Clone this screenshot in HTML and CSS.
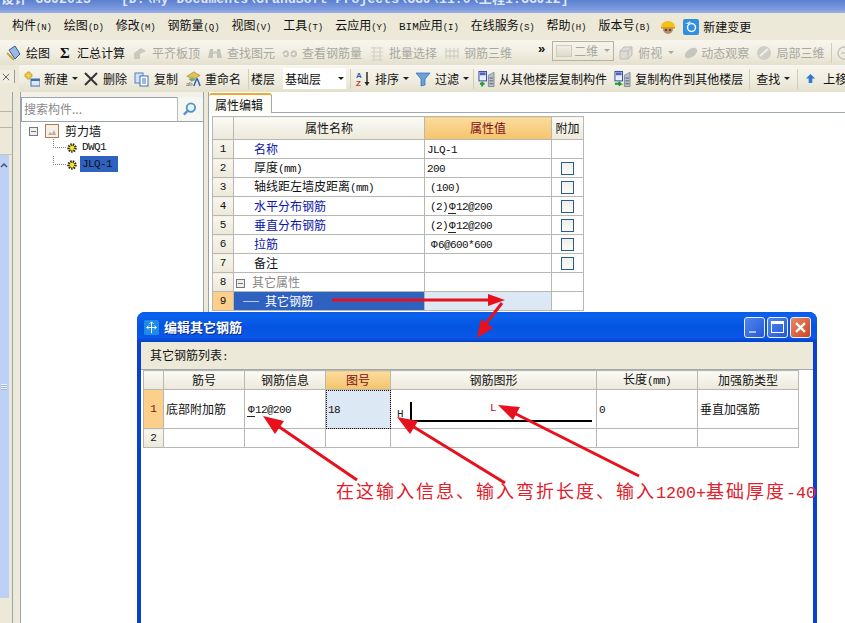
FILE: index.html
```html
<!DOCTYPE html>
<html lang="zh-CN">
<head>
    <meta charset="UTF-8">
    <title>GGJ2013</title>
    <link rel="stylesheet" href="styles.css">
</head>
<body>
    <div class="titlebar"><span>设计 GGJ2013</span><span class="title-path">[D:\My Documents\GrandSoft Projects\GGJ\11.0\工程1.GGJ12]</span></div>

    <div class="menubar">
        <span>构件<i>(N)</i></span>
        <span>绘图<i>(D)</i></span>
        <span>修改<i>(M)</i></span>
        <span>钢筋量<i>(Q)</i></span>
        <span>视图<i>(V)</i></span>
        <span>工具<i>(T)</i></span>
        <span>云应用<i>(Y)</i></span>
        <span><b class="lat">BIM</b>应用<i>(I)</i></span>
        <span>在线服务<i>(S)</i></span>
        <span>帮助<i>(H)</i></span>
        <span>版本号<i>(B)</i></span>
        <svg class="ico hat" viewBox="0 0 16 16"><circle cx="8" cy="10" r="5" fill="#b98a68"/><path d="M1 9c0-5 3-7 7-7s7 2 7 7z" fill="#f2c21a"/><rect x="1" y="8" width="14" height="1.5" fill="#d99a10"/><circle cx="6" cy="11" r="1" fill="#333"/><circle cx="10" cy="11" r="1" fill="#333"/></svg>
        <span class="tool change"><svg class="ico" viewBox="0 0 16 16"><rect width="16" height="16" rx="2" fill="#2f8fe0"/><circle cx="8.5" cy="8.5" r="4" fill="none" stroke="#fff" stroke-width="1.5"/><path d="M2 5l5-3 1 3z" fill="#bfe2ff"/></svg>新建变更</span>
    </div>

    <div class="toolbar tb-top">
        <span class="tool"><svg class="ico" viewBox="0 0 16 16"><path d="M3 5l6-4 5 8-5 5z" fill="#9db7e4" stroke="#3a5a9a"/><path d="M1 8l7 7" stroke="#c9a340" stroke-width="2"/></svg>绘图</span>
        <span class="tool sum"><b class="sigma">Σ</b>汇总计算</span>
        <span class="tool off"><svg class="ico" viewBox="0 0 16 16"><path d="M2 14V8l7-5 5 3-6 3v5z" fill="#c8c8c0"/></svg>平齐板顶</span>
        <span class="tool off"><svg class="ico" viewBox="0 0 16 16"><path d="M1 13l2-9h3v9zM10 13V4h3l2 9z" fill="#c4c4bc"/><rect x="6" y="6" width="4" height="3" fill="#d2d2ca"/></svg>查找图元</span>
        <span class="tool off"><svg class="ico" viewBox="0 0 16 16"><path d="M1 9c2-4 5-3 5 0s-3 3-4 1M9 9c2-4 5-3 5 0s-3 3-5 1" fill="none" stroke="#c4c4bc" stroke-width="2"/></svg>查看钢筋量</span>
        <span class="tool off"><svg class="ico" viewBox="0 0 16 16"><path d="M2 3h12M2 7h12M2 11h12M2 15h12M5 2v14M11 2v14" stroke="#d0d0c8"/></svg>批量选择</span>
        <span class="tool off"><svg class="ico" viewBox="0 0 16 16"><path d="M2 3v11M6 3v11M10 3v11M14 3v11M2 6h12M2 11h12" stroke="#c8c8c0"/></svg>钢筋三维</span>
        <span class="more">»</span>
        <span class="combo-off"><span class="swatch"></span>二维<span class="caret"></span></span>
        <span class="tool off view"><svg class="ico" viewBox="0 0 16 16"><path d="M2 6l4-4h8v8l-4 4H2z" fill="#dcdcd4" stroke="#bdbdb5"/><path d="M2 6h8v8M10 6l4-4" fill="none" stroke="#bdbdb5"/></svg>俯视<span class="caret off-caret"></span></span>
        <span class="tool off orbit"><svg class="ico" viewBox="0 0 16 16"><ellipse cx="8" cy="8" rx="7" ry="4" transform="rotate(-35 8 8)" fill="#c6c6be"/></svg>动态观察</span>
        <span class="tool off"><svg class="ico" viewBox="0 0 16 16"><circle cx="8" cy="8" r="7" fill="#cfcfc7"/><path d="M4 11l8-7" stroke="#f2f0e6" stroke-width="2"/></svg>局部三维</span>
        <span class="sep end-sep"></span>
        <svg class="ico" viewBox="0 0 16 16"><circle cx="8" cy="8" r="6" fill="none" stroke="#c4c4bc" stroke-width="1.5"/><path d="M5 8h6" stroke="#c4c4bc" stroke-width="1.5"/></svg>
    </div>

    <div class="tb-row">
        <button class="close-x">
            <svg viewBox="0 0 10 10"><path d="M1 1l8 8M9 1l-8 8" stroke="#444" fill="none"/></svg>
        </button>
        <div class="toolbar tb-edit">
            <span class="tool"><svg class="ico" viewBox="0 0 16 16"><path d="M3 1h3v2h2v3H6v2H3V6H1V3h2z" fill="#f4d040" stroke="#a88a20" stroke-width=".6"/><rect x="7" y="8" width="9" height="7" fill="#dce8fa" stroke="#3f6fb5"/><rect x="7" y="8" width="9" height="2" fill="#3f6fb5"/></svg>新建<span class="caret"></span></span>
            <span class="tool del"><svg class="ico" viewBox="0 0 14 14"><path d="M1 1l12 12M13 1L1 13" stroke="#333" stroke-width="2" fill="none"/></svg>删除</span>
            <span class="tool"><svg class="ico" viewBox="0 0 16 16"><rect x="1" y="2" width="8" height="10" fill="#cfe0f7" stroke="#5a7fb5"/><rect x="6" y="5" width="8" height="10" fill="#fff" stroke="#3f6fb5"/><path d="M8 8h4M8 10h4M8 12h4" stroke="#3f6fb5"/></svg>复制</span>
            <span class="tool rename"><svg class="ico" viewBox="0 0 18 18"><path d="M2 6l8-5 7 4-7 4z" fill="#e3c05a" stroke="#8a7428" stroke-width=".6"/><path d="M4 9l5-2 3 3-5 2z" fill="#7fb06a"/><text x="1" y="17" class="ico-text">ab</text><path d="M10 17l3-8h1l3 8" fill="none" stroke="#2a5cb0" stroke-width="1.6"/></svg>重命名</span>
            <span class="sep"></span>
            <span class="floor-label">楼层</span>
            <span class="combo">基础层<span class="caret"></span></span>
            <span class="sep"></span>
            <span class="tool"><svg class="ico" viewBox="0 0 16 16"><text x="1" y="7" class="az a">A</text><text x="1" y="15" class="az z">Z</text><path d="M12 1v12" stroke="#222" stroke-width="1.4"/><path d="M9.5 11l2.500 4 2.500-4z" fill="#222"/></svg>排序<span class="caret"></span></span>
            <span class="tool filter"><svg class="ico" viewBox="0 0 16 16"><path d="M1 2h14L10 8v6l-4 1V8z" fill="#6aa0dc" stroke="#2f66b0" stroke-width=".7"/></svg>过滤<span class="caret"></span></span>
            <span class="sep"></span>
            <span class="tool"><svg class="ico wide" viewBox="0 0 18 18"><rect x="1" y="1" width="8" height="10" fill="#e8eefb" stroke="#33459a"/><rect x="2" y="2" width="6" height="3" fill="#4c62c8"/><path d="M2 14h5M4.500 12v5" stroke="#1d9a3c" stroke-width="2"/><path d="M11 5l6-3v15h-6z" fill="#b9c2cc" stroke="#66707c" stroke-width=".7"/><path d="M12 8h4M12 11h4M12 14h4" stroke="#55606c"/></svg>从其他楼层复制构件</span>
            <span class="tool"><svg class="ico wide" viewBox="0 0 18 18"><rect x="1" y="1" width="8" height="10" fill="#e8eefb" stroke="#33459a"/><rect x="2" y="2" width="6" height="3" fill="#4c62c8"/><path d="M1 14h6l-2-2M7 14l-2 2" stroke="#1d9a3c" stroke-width="2" fill="none"/><path d="M11 5l6-3v15h-6z" fill="#b9c2cc" stroke="#66707c" stroke-width=".7"/><path d="M12 8h4M12 11h4M12 14h4" stroke="#55606c"/></svg>复制构件到其他楼层</span>
            <span class="sep find-sep"></span>
            <span class="tool find">查找<span class="caret"></span></span>
            <span class="sep up-sep"></span>
            <span class="tool up"><svg class="ico small" viewBox="0 0 12 12"><path d="M6 1l5 5H8v5H4V6H1z" fill="#2f78d8"/></svg>上移</span>
        </div>
    </div>

    <div class="main">
        <div class="nav">
            <div class="nav-head"></div>
            <div class="nav-rest">
                <svg class="chev" viewBox="0 0 8 6"><path d="M1 5l3-3 3 3" fill="none" stroke="#456" stroke-width="1.5"/></svg>
                <span class="grip"></span>
            </div>
        </div>

        <div class="tree-panel">
            <div class="search">
                <span class="search-box">搜索构件...</span>
                <span class="search-btn"><svg viewBox="0 0 16 16"><circle cx="9.500" cy="6.500" r="4.500" fill="#e8f2fb" stroke="#4f94cf" stroke-width="2"/><path d="M6 10l-4 4" stroke="#4f94cf" stroke-width="2.500"/></svg></span>
            </div>
            <div class="tree">
                <div class="tree-root">
                    <span class="minus"></span>
                    <svg class="ico root-ico" viewBox="0 0 14 14"><rect x=".5" y=".5" width="13" height="13" fill="#f6efe6" stroke="#b07a55"/><path d="M3 11l2-3 2 2 2-4 2 5z" fill="#b8b0a8"/></svg>
                    <span class="root-label">剪力墙</span>
                </div>
                <div class="tree-kids">
                    <div class="tree-item">
                        <svg class="gear" viewBox="0 0 12 12"><circle cx="6" cy="6" r="3.500" fill="#f6e324" stroke="#222" stroke-width="2.500" stroke-dasharray="1.400 1"/></svg>
                        <span class="lat item-label">DWQ1</span>
                    </div>
                    <div class="tree-item">
                        <svg class="gear" viewBox="0 0 12 12"><circle cx="6" cy="6" r="3.500" fill="#f6e324" stroke="#222" stroke-width="2.500" stroke-dasharray="1.400 1"/></svg>
                        <span class="lat item-label selected">JLQ-1</span>
                    </div>
                </div>
            </div>
        </div>

        <div class="prop-panel">
            <div class="tabs"><span class="tab">属性编辑</span></div>
            <table class="grid prop-grid">
                <colgroup><col class="p-num"><col class="p-name"><col class="p-val"><col class="p-ext"></colgroup>
                <tr class="head">
                    <th></th>
                    <th>属性名称</th>
                    <th class="hot">属性值</th>
                    <th>附加</th>
                </tr>
                <tr><td class="num">1</td><td class="name link">名称</td><td class="val"><span class="lat">JLQ-1</span></td><td></td></tr>
                <tr><td class="num">2</td><td class="name">厚度<span class="lat">(mm)</span></td><td class="val"><span class="lat">200</span></td><td><span class="check"></span></td></tr>
                <tr><td class="num">3</td><td class="name">轴线距左墙皮距离<span class="lat">(mm)</span></td><td class="val ind"><span class="lat">(100)</span></td><td><span class="check"></span></td></tr>
                <tr><td class="num">4</td><td class="name link">水平分布钢筋</td><td class="val ind"><span class="lat">(2)<b class="rebar">Φ</b>12@200</span></td><td><span class="check"></span></td></tr>
                <tr><td class="num">5</td><td class="name link">垂直分布钢筋</td><td class="val ind"><span class="lat">(2)<b class="rebar">Φ</b>12@200</span></td><td><span class="check"></span></td></tr>
                <tr><td class="num">6</td><td class="name link">拉筋</td><td class="val ind"><span class="lat"><b class="rebar plain">Φ</b>6@600*600</span></td><td><span class="check"></span></td></tr>
                <tr><td class="num">7</td><td class="name">备注</td><td></td><td><span class="check"></span></td></tr>
                <tr><td class="num">8</td><td class="group"><span class="minus light"></span>其它属性</td><td></td><td></td></tr>
                <tr class="active"><td class="num">9</td><td class="sub"><span class="branch"></span>其它钢筋</td><td class="val-sel"></td><td></td></tr>
            </table>
        </div>
    </div>

    <div class="dialog">
        <div class="dlg-title">
            <svg class="dlg-ico" viewBox="0 0 16 16"><rect width="16" height="16" rx="2" fill="#1f8ae8"/><path d="M8 2v12M3 8h10M3 8l2-2M3 8l2 2M13 8l-2-2M13 8l-2 2M8 2L6 4M8 2l2 2" stroke="#fff" fill="none"/></svg>
            <span class="dlg-name">编辑其它钢筋</span>
            <span class="win-btn min"><span></span></span>
            <span class="win-btn max"><span></span></span>
            <span class="win-btn close"><svg viewBox="0 0 10 10"><path d="M1 1l8 8M9 1l-8 8" stroke="#fff" stroke-width="2"/></svg></span>
        </div>
        <div class="dlg-body">
            <div class="dlg-label">其它钢筋列表<span class="lat">:</span></div>
            <table class="grid rebar-grid">
                <colgroup><col class="r-num"><col class="r-a"><col class="r-b"><col class="r-c"><col class="r-d"><col class="r-e"><col class="r-f"></colgroup>
                <tr class="head">
                    <th></th>
                    <th>筋号</th>
                    <th>钢筋信息</th>
                    <th class="hot">图号</th>
                    <th>钢筋图形</th>
                    <th>长度<span class="lat">(mm)</span></th>
                    <th>加强筋类型</th>
                </tr>
                <tr class="tall">
                    <td class="num hot-num">1</td>
                    <td class="val">底部附加筋</td>
                    <td class="val"><span class="lat"><b class="rebar">Φ</b>12@200</span></td>
                    <td class="val focus"><span class="lat">18</span></td>
                    <td class="shape">
                        <svg viewBox="0 0 205 38">
                            <text x="6" y="27" class="shape-h">H</text>
                            <text x="99" y="21" class="shape-l">L</text>
                            <path d="M20 12v20M20 31h181" stroke="#000" stroke-width="2" fill="none"/>
                        </svg>
                    </td>
                    <td class="val"><span class="lat">0</span></td>
                    <td class="val">垂直加强筋</td>
                </tr>
                <tr><td class="num">2</td><td></td><td></td><td></td><td></td><td></td><td></td></tr>
            </table>
        </div>
    </div>

    <svg class="marks" viewBox="0 0 845 623">
        <g stroke="#e8101c" stroke-width="3" fill="none">
            <path d="M332 300H492"/>
            <path d="M502 303L484 326"/>
            <path d="M357 480L275 424"/>
            <path d="M505 483L409 424"/>
            <path d="M639 476L512 412"/>
        </g>
        <g fill="#e8101c">
            <path d="M505 300L488 294V306z"/>
            <path d="M477 338L481 319L493 328z"/>
            <path d="M263 416L284 421L275 434z"/>
            <path d="M397 417L418 421L410 434z"/>
            <path d="M498 405L520 407L513 420z"/>
        </g>
    </svg>
    <div class="note">在这输入信息、输入弯折长度、输入<span>1200+</span>基础厚度<span>-40</span></div>
</body>
</html>
```

FILE: styles.css
```css
* {
    box-sizing: border-box;
}
html, body {
    margin: 0;
    height: 623px;
    overflow: hidden;
}
body {
    position: relative;
    width: 845px;
    background: white;
    font-family: "Noto Sans CJK SC", "Liberation Sans", sans-serif;
    font-size: 12px;
    line-height: 16px;
    color: #111;
}
.lat {
    font-family: "Liberation Mono", monospace;
    font-size: 11px;
    font-weight: normal;
    letter-spacing: -0.6px;
}

/* title and menu */
.titlebar {
    height: 13px;
    overflow: hidden;
    display: flex;
    gap: 30px;
    padding-left: 1px;
    background: linear-gradient(#5a7fd0, #7d9ade 70%, #9db1e4);
    color: #dfe7f8;
    font-family: "Liberation Mono", "Noto Sans CJK SC", monospace;
    font-size: 13px;
    font-weight: bold;
    line-height: 12px;
    letter-spacing: 0.15px;
}
.titlebar span {
    margin-top: -6px;
}
.menubar {
    height: 27px;
    display: flex;
    align-items: center;
    gap: 12px;
    padding-left: 12px;
    background: #ece9d8;
}
.menubar i {
    font-family: "Liberation Mono", monospace;
    font-style: normal;
    font-size: 9px;
    letter-spacing: -0.12px;
}
.menubar .lat {
    letter-spacing: 0;
}
.menubar .hat {
    margin: 0 -5px 0 -2px;
}

/* toolbars */
.toolbar {
    display: flex;
    align-items: center;
    gap: 7px;
    overflow: hidden;
    white-space: nowrap;
    background: linear-gradient(#f7f5ee, #efecdf 60%, #e4e0cd);
}
.tb-top {
    height: 25px;
    padding-left: 6px;
}
.tb-row {
    height: 27px;
    display: flex;
    background: #ece9d8;
}
.tb-edit {
    flex: 1;
    padding-left: 5px;
    margin-left: 4px;
    border-radius: 3px 0 0 3px;
}
.tool {
    display: flex;
    align-items: center;
    gap: 4px;
    flex: none;
}
.ico {
    width: 16px;
    height: 16px;
    flex: none;
}
.ico.wide {
    width: 17px;
    height: 18px;
}
.ico.small {
    width: 11px;
    height: 11px;
    margin-right: 3px;
}
.ico-text {
    font-family: "Liberation Serif", serif;
    font-size: 8px;
    fill: #555;
}
.az {
    font-family: "Liberation Sans", sans-serif;
    font-size: 8px;
    font-weight: bold;
}
.az.a {
    fill: #2a5cb0;
}
.az.z {
    fill: #c0392b;
}
.off {
    color: #a8a89e;
}
.sigma {
    width: 11px;
    font-family: "Liberation Serif", serif;
    font-size: 15px;
    margin-right: 2px;
}
.sum {
    margin-left: 3px;
}
.more {
    flex: none;
    margin-left: 19px;
    font-family: "Liberation Sans", sans-serif;
    font-size: 13px;
    font-weight: bold;
    line-height: 8px;
    align-self: flex-start;
    margin-top: 5px;
}
.combo-off {
    flex: none;
    width: 62px;
    height: 20px;
    margin: -4px -3px 0 0;
    display: flex;
    align-items: center;
    gap: 2px;
    padding-left: 3px;
    border: 1px solid #b5b2a2;
    color: #a8a89e;
}
.swatch {
    width: 16px;
    height: 12px;
    background: linear-gradient(#f2f0e6, #dcdacb);
    border: 1px solid #cfccbc;
}
.caret {
    display: inline-block;
    width: 0;
    height: 0;
    border: 3px solid transparent;
    border-top: 3px solid #222;
    border-bottom: 0;
}
.combo-off .caret {
    border-top-color: #a8a89e;
    margin-left: 4px;
}
.off-caret {
    border-top-color: #a8a89e;
    margin-left: 2px;
}
.view {
    margin-right: 2px;
}
.orbit {
    gap: 2px;
}
.sep {
    width: 1px;
    height: 20px;
    flex: none;
    background: #cfccb8;
    margin: 0 -3px;
}
.end-sep {
    margin-left: 0;
}
.close-x {
    width: 15px;
    height: 13px;
    margin-top: 5px;
    padding: 1px 4px 1px 2px;
    background: #f0eee2;
    border: 0;
    border-right: 1px solid #9a9a90;
}
.close-x svg {
    display: block;
}
.del {
    margin-left: -1px;
}
.del .ico {
    width: 14px;
    height: 14px;
    margin-right: 1px;
}
.rename {
    margin-right: 3px;
}
.floor-label {
    margin: 0 1px 0 -2px;
}
.combo {
    width: 63px;
    height: 21px;
    flex: none;
    display: flex;
    align-items: center;
    padding-left: 2px;
    background: white;
}
.combo .caret {
    margin-left: 17px;
}
.filter {
    margin-left: -1px;
}
.find-sep {
    margin-left: -1px;
}
.find {
    margin-left: 2px;
}
.up-sep {
    margin-left: 0;
}
.up {
    margin-left: 3px;
}

/* main area */
.main {
    height: 531px;
    display: flex;
    overflow: hidden;
}
.nav {
    width: 21px;
    flex: none;
    display: flex;
    flex-direction: column;
    background: #ece9d8;
    border-right: 1px solid #9aa4ac;
}
.nav-head {
    height: 63px;
    width: 13px;
    border-bottom: 1px solid #c9c6b6;
    border-right: 1px solid #9aa4ac;
    background: linear-gradient(#ece9d8 19px, #b8b5a6 19px, #b8b5a6 20px, #ece9d8 20px, #ece9d8 35px, #b8b5a6 35px, #b8b5a6 36px, #ece9d8 36px);
}
.nav-rest {
    width: 13px;
    flex: 1;
    border-right: 1px solid #9aa4ac;
    background: linear-gradient(#bdd0f6 443px, #ece9d8 443px);
    box-shadow: inset -3px 0 0 #ece9d8;
}
.chev {
    display: block;
    width: 8px;
    height: 6px;
    margin: 7px 0 0 0;
}
.grip {
    display: block;
    width: 6px;
    height: 6px;
    margin: 216px 0 0 1px;
    background: repeating-linear-gradient(#eef3fd 0 1px, #9fb3dc 1px 2px);
}
.tree-panel {
    width: 183px;
    flex: none;
    border-right: 1px solid #9aa4ac;
    background: white;
}
.search {
    height: 30px;
    display: flex;
    padding-top: 5px;
    background: #f3f1e7;
    border-bottom: 1px solid #9aa4ac;
}
.search-box {
    width: 157px;
    height: 25px;
    padding: 3px 2px;
    color: #8a8a8a;
    background: white;
    border: 1px solid #9aa4ac;
    border-right-color: #b8bcc0;
}
.search-btn {
    flex: 1;
    padding: 4px 4px;
    background: #f7f7f2;
}
.search-btn svg {
    display: block;
    width: 15px;
    height: 16px;
}
.tree {
    padding-left: 8px;
}
.tree-root {
    display: flex;
    align-items: center;
    height: 18px;
}
.minus {
    display: inline-block;
    width: 9px;
    height: 9px;
    flex: none;
    border: 1px solid #777;
    background: linear-gradient(#777, #777) center / 5px 1px no-repeat, #eeeeea;
}
.root-ico {
    width: 14px;
    height: 14px;
    margin-left: 7px;
}
.root-label {
    margin-left: 6px;
}
.tree-kids {
    margin: -1px 0 0 24px;
}
.tree-item {
    height: 17px;
    display: flex;
    align-items: center;
    padding-left: 12px;
    position: relative;
}
.tree-item::before {
    content: "";
    position: absolute;
    left: 0;
    top: 0;
    bottom: 8px;
    width: 12px;
    border-left: 1px dotted #888;
    border-bottom: 1px dotted #888;
}
.gear {
    width: 12px;
    height: 12px;
    margin-left: 1px;
    flex: none;
}
.item-label {
    margin-left: 2px;
    padding: 0 2px;
    margin-top: -1px;
    height: 16px;
    line-height: 16px;
}
.selected {
    background: #2f62c0;
    padding-right: 6px;
}

/* properties grid */
.prop-panel {
    flex: 1;
    margin-left: 4px;
    min-width: 0;
    border-left: 1px solid #9aa4ac;
    background: white;
    box-shadow: -4px 0 0 #ece9d8;
}
.tabs {
    height: 21px;
    padding-top: 1px;
    border-bottom: 1px solid #a0a8b0;
}
.tab {
    display: block;
    width: 63px;
    height: 20px;
    padding: 2px 0 0 6px;
    background: #fbfbf6;
    border: 1px solid #a0a8b0;
    border-top: 2px solid #f0a830;
    border-bottom: 0;
    border-radius: 3px 3px 0 0;
    border-left: 0;
}
.grid {
    border-collapse: collapse;
    table-layout: fixed;
}
.grid td, .grid th {
    padding: 0;
    height: 19px;
    overflow: hidden;
    white-space: nowrap;
    border: 1px solid #b8b8b2;
    font-weight: normal;
}
.grid th {
    text-align: center;
    background: linear-gradient(#fbfaf5, #ece9da);
}
.grid th.hot {
    background: linear-gradient(#fbdc9e, #f5c36a);
    color: #7a1020;
}
.prop-grid {
    width: 371px;
    margin: 3px 0 0 3px;
}
.prop-grid .head th {
    height: 23px;
}
.p-num {
    width: 21px;
}
.p-name {
    width: 191px;
}
.p-val {
    width: 127px;
}
.p-ext {
    width: 32px;
}
.num {
    text-align: center;
    background: linear-gradient(#f8f6ee, #ece9da);
    font-family: "Liberation Mono", monospace;
    font-size: 11px;
}
.name {
    padding-left: 20px !important;
}
.link {
    color: #0a14a8;
}
.val {
    padding-left: 2px !important;
}
.val.ind {
    padding-left: 5px !important;
}
.rebar {
    font-weight: normal;
    border-bottom: 1px solid #222;
    padding: 0 1px;
}
.rebar.plain {
    border-bottom: 0;
}
.check {
    display: block;
    width: 13px;
    height: 13px;
    margin: 0 auto;
    background: linear-gradient(#f0f0ea, #fbfbf8);
    border: 1px solid #2c5a8c;
}
.group {
    color: #888;
    padding-left: 2px !important;
}
.minus.light {
    margin: 0 7px 0 0;
    vertical-align: -1px;
}
.active .num {
    background: #fcd08a;
}
.sub {
    background: #2f62c0;
    color: white;
}
.branch {
    display: inline-block;
    width: 16px;
    height: 1px;
    margin: 0 6px 0 9px;
    vertical-align: 4px;
    background: #b8c8e8;
}
.val-sel {
    background: #dde8f5;
}

/* dialog */
.dialog {
    position: absolute;
    left: 137px;
    top: 312px;
    width: 680px;
    height: 320px;
    display: flex;
    flex-direction: column;
    background: #0a3fd0;
    border: 4px solid #0a3fd0;
    border-top: 0;
    border-radius: 8px 8px 0 0;
}
.dlg-title {
    height: 30px;
    flex: none;
    margin: 0 -4px;
    padding: 0 6px 0 7px;
    display: flex;
    align-items: center;
    border-radius: 8px 8px 0 0;
    background: linear-gradient(#0a5ae6, #0a62ee 12%, #0554e0 50%, #0a58e8 85%, #0440c8);
    color: white;
}
.dlg-ico {
    width: 15px;
    height: 15px;
}
.dlg-name {
    flex: 1;
    margin-left: 5px;
    font-size: 13px;
    font-weight: bold;
    text-shadow: 1px 1px 0 #0a2a8a;
}
.win-btn {
    width: 21px;
    height: 21px;
    margin-left: 2px;
    flex: none;
    display: flex;
    border: 1px solid #e8eefc;
    border-radius: 3px;
    background: linear-gradient(135deg, #4f86ee, #2458d8);
}
.win-btn.min span {
    width: 7px;
    height: 2px;
    margin: 13px 0 0 4px;
    background: #a8c4f4;
}
.win-btn.max span {
    width: 13px;
    height: 12px;
    margin: 3px;
    border: 1px solid white;
    border-top-width: 3px;
}
.win-btn.close {
    background: linear-gradient(135deg, #e88a6a, #cc4420);
    padding: 4px;
}
.win-btn.close svg {
    width: 100%;
    height: 100%;
}
.dlg-body {
    flex: 1;
    background: white;
}
.dlg-label {
    height: 28px;
    padding: 5px 0 0 9px;
    background: #ece9d8;
    border-bottom: 1px solid #a0a8b0;
}
.rebar-grid {
    width: 655px;
    margin-left: 2px;
}
.rebar-grid .head th {
    height: 19px;
}
.rebar-grid .tall td {
    height: 39px;
}
.r-num {
    width: 20px;
}
.r-a, .r-b {
    width: 81px;
}
.r-c {
    width: 65px;
}
.r-d {
    width: 206px;
}
.r-e, .r-f {
    width: 101px;
}
.hot-num {
    background: #fcd08a;
    color: #6a1810;
}
.focus {
    background: #dde8f5;
    outline: 1px dotted #111;
    outline-offset: -1px;
}
.shape svg {
    display: block;
    width: 205px;
    height: 38px;
}
.shape-h {
    font-family: "Liberation Mono", monospace;
    font-size: 11px;
    fill: #222;
}
.shape-l {
    font-family: "Liberation Mono", monospace;
    font-size: 11px;
    fill: #c01028;
}

/* red annotation */
.marks {
    position: absolute;
    left: 0;
    top: 0;
    width: 845px;
    height: 623px;
    pointer-events: none;
}
.note {
    position: absolute;
    left: 336px;
    top: 477px;
    font-size: 18px;
    line-height: 26px;
    letter-spacing: 2px;
    color: #e0202a;
    white-space: nowrap;
}
.note span {
    font-family: "Liberation Mono", monospace;
    font-size: 16.67px;
    letter-spacing: 0;
}
```
